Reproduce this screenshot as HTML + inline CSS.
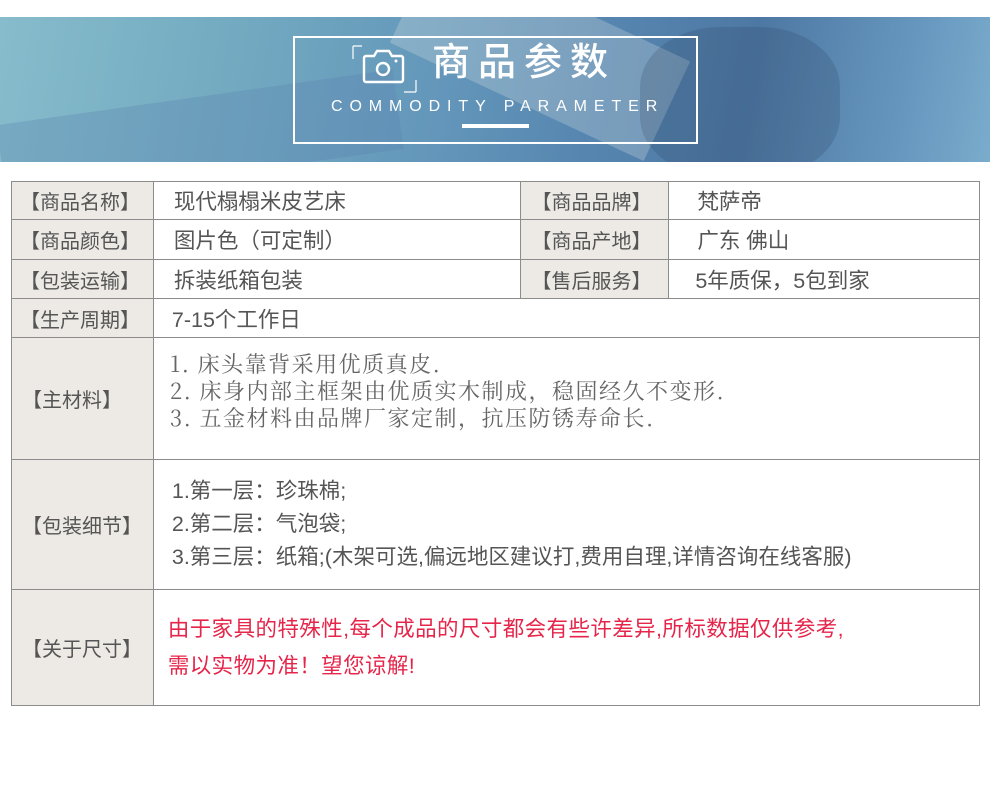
<!DOCTYPE html>
<html><head><meta charset="utf-8"><style>
*{margin:0;padding:0;box-sizing:border-box}
body{width:990px;height:797px;background:#fff;font-family:"Liberation Sans","Noto Sans CJK SC",sans-serif;color:#555;position:relative;overflow:hidden}
.banner{position:absolute;left:0;top:17px;width:990px;height:145px;background:linear-gradient(100deg,#86bccb 0%,#72a9c0 25%,#6396ba 45%,#5686b0 60%,#4d78a3 75%,#6595bd 90%,#7aaccc 100%);overflow:hidden}
.banner .d1{position:absolute;left:400px;top:-20px;width:280px;height:110px;background:rgba(230,235,230,.25);transform:rotate(25deg)}
.banner .d2{position:absolute;left:640px;top:10px;width:200px;height:150px;background:rgba(40,60,90,.2);border-radius:40%}
.banner .d3{position:absolute;left:0;top:80px;width:400px;height:80px;background:rgba(90,130,175,.3);transform:rotate(-8deg)}
.box{position:absolute;left:293px;top:19px;width:405px;height:108px;border:2px solid #fff}
.t1{position:absolute;left:432px;top:44px;font-size:38px;color:#fff;letter-spacing:8px;line-height:1;font-weight:500}
.t2{position:absolute;left:331px;top:99px;font-size:16px;color:#fff;letter-spacing:6.9px;line-height:1}
.bar{position:absolute;left:462px;top:124px;width:67px;height:4px;background:#fff}
table{position:absolute;left:11px;top:181px;border-collapse:collapse;width:969px}
td{border:1px solid #8c8c8c;font-size:21.5px;padding:0;vertical-align:middle;color:#555}
td.l{background:#ede9e5;text-align:left;padding-left:10px;font-size:20px}
td.c{padding-left:20px}
.serif{font-family:"Noto Serif CJK SC",serif;font-size:22px!important;letter-spacing:1.5px;line-height:27px;padding-left:16px!important;color:#666}
.red{color:#e5264a!important;line-height:37px;letter-spacing:0.4px}
</style></head><body>
<div class="banner"><div class="d3"></div><div class="d1"></div><div class="d2"></div>
<div class="box"></div>
<svg style="position:absolute;left:352px;top:28px" width="66" height="48" viewBox="0 0 66 48">
<path d="M1 1H10M1 1V14" stroke="#fff" stroke-width="1.2" fill="none"/>
<path d="M64 47H52M64 47V35" stroke="#fff" stroke-width="1.2" fill="none"/>
<path d="M14 11h8l3-5h12l3 5h9a2 2 0 0 1 2 2v22a2 2 0 0 1-2 2H14a2 2 0 0 1-2-2V13a2 2 0 0 1 2-2z" stroke="#fff" stroke-width="2.4" fill="none"/>
<circle cx="31" cy="24" r="6" stroke="#fff" stroke-width="2.4" fill="none"/>
<circle cx="44" cy="16" r="1.5" fill="#fff"/>
</svg>
</div>
<div class="t1">商品参数</div>
<div class="t2">COMMODITY PARAMETER</div>
<div class="bar"></div>
<table>
<colgroup><col style="width:142px"><col style="width:368px"><col style="width:148px"><col style="width:311px"></colgroup>
<tr style="height:38px"><td class="l" style="padding-left:8px">【商品名称】</td><td class="c">现代榻榻米皮艺床</td><td class="l">【商品品牌】</td><td class="c" style="padding-left:28px">梵萨帝</td></tr>
<tr style="height:40px"><td class="l" style="padding-left:8px">【商品颜色】</td><td class="c">图片色（可定制）</td><td class="l">【商品产地】</td><td class="c" style="padding-left:28px">广东 佛山</td></tr>
<tr style="height:39px"><td class="l" style="padding-left:8px">【包装运输】</td><td class="c">拆装纸箱包装</td><td class="l">【售后服务】</td><td class="c" style="padding-left:26px">5年质保，5包到家</td></tr>
<tr style="height:39px"><td class="l" style="padding-left:8px">【生产周期】</td><td colspan="3" class="c" style="padding-left:18px">7-15个工作日</td></tr>
<tr style="height:122px"><td class="l">【主材料】</td><td colspan="3" class="c serif" style="vertical-align:top;padding-top:12px">1. 床头靠背采用优质真皮.<br>2. 床身内部主框架由优质实木制成，稳固经久不变形.<br>3. 五金材料由品牌厂家定制，抗压防锈寿命长.</td></tr>
<tr style="height:130px"><td class="l">【包装细节】</td><td colspan="3" class="c" style="line-height:33px;padding-left:18px">1.第一层：珍珠棉;<br>2.第二层：气泡袋;<br>3.第三层：纸箱;(木架可选,偏远地区建议打,费用自理,详情咨询在线客服)</td></tr>
<tr style="height:116px"><td class="l">【关于尺寸】</td><td colspan="3" class="c red" style="padding-left:14px">由于家具的特殊性,每个成品的尺寸都会有些许差异,所标数据仅供参考,<br>需以实物为准！望您谅解!</td></tr>
</table>
</body></html>
